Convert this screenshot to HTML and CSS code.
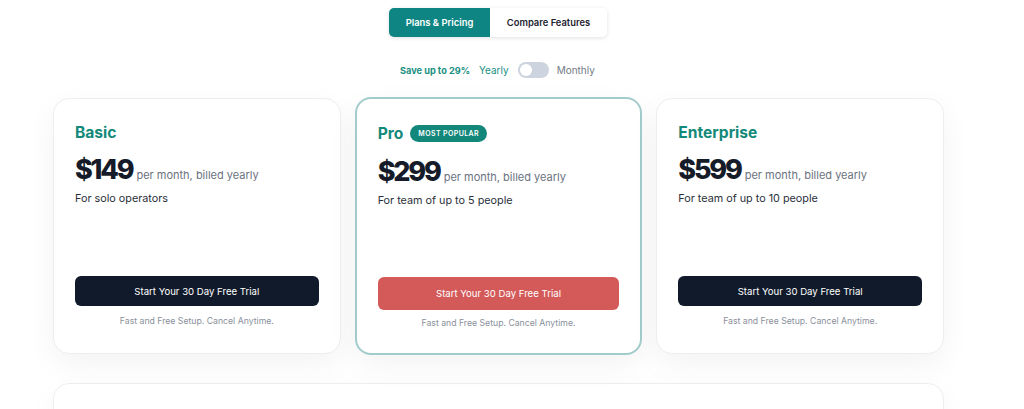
FILE: index.html
```html
<!DOCTYPE html>
<html lang="en">
<head>
  <meta charset="UTF-8">
  <title>Plans &amp; Pricing</title>
  <link rel="stylesheet" href="styles.css">
</head>
<body>
  <div class="page">
    <div class="tabs">
      <button class="tab active">Plans &amp; Pricing</button>
      <button class="tab">Compare Features</button>
    </div>

    <div class="billing">
      <span class="save">Save up to 29%</span>
      <span class="yearly">Yearly</span>
      <span class="switch"><span class="knob"></span></span>
      <span class="monthly">Monthly</span>
    </div>

    <div class="plans">
      <div class="plan">
        <h2>Basic</h2>
        <div class="price"><strong>$149</strong><span>per month, billed yearly</span></div>
        <p class="who">For solo operators</p>
        <button class="trial">Start Your 30 Day Free Trial</button>
        <p class="note">Fast and Free Setup. Cancel Anytime.</p>
      </div>

      <div class="plan popular">
        <h2>Pro <span class="badge">MOST POPULAR</span></h2>
        <div class="price"><strong>$299</strong><span>per month, billed yearly</span></div>
        <p class="who">For team of up to 5 people</p>
        <button class="trial">Start Your 30 Day Free Trial</button>
        <p class="note">Fast and Free Setup. Cancel Anytime.</p>
      </div>

      <div class="plan">
        <h2>Enterprise</h2>
        <div class="price"><strong>$599</strong><span>per month, billed yearly</span></div>
        <p class="who">For team of up to 10 people</p>
        <button class="trial">Start Your 30 Day Free Trial</button>
        <p class="note">Fast and Free Setup. Cancel Anytime.</p>
      </div>
    </div>

    <div class="compare"></div>
  </div>
</body>
</html>
```

FILE: styles.css
```css
:root {
  --teal: #0f8583;
  --title: #13897a;
  --navy: #111a2a;
  --red: #d45a5a;
  --gray: #8a909b;
  --text: #2a2f3a;
}

body {
  margin: 0;
  font-family: Inter, 'Noto Sans', sans-serif;
  background: #fff;
  color: var(--text);
  overflow: hidden;
}

.page {
  width: 891px;
  margin-left: 53px;
  padding-top: 8px;
}

.tabs {
  display: flex;
  width: 218px;
  height: 29px;
  margin: 0 auto 0 336px;
  border-radius: 5px;
  box-shadow: 0 1px 4px rgba(0, 0, 0, 0.12);
  overflow: hidden;
}

.tab {
  border: none;
  background: #fff;
  font-family: inherit;
  font-size: 9.4px;
  font-weight: 600;
  color: #1d2230;
  padding: 0;
  flex: 1 1 auto;
}

.tab.active {
  background: var(--teal);
  color: #fff;
  flex: 0 0 101px;
}

.billing {
  display: flex;
  align-items: center;
  height: 18px;
  margin: 24px 0 0 347px;
  font-size: 9.2px;
}

.save {
  color: #1a8f82;
  font-weight: 700;
  margin-right: 9px;
}

.yearly {
  color: #1a8f82;
  font-size: 10px;
  margin-right: 9px;
}

.monthly {
  color: #747b87;
  font-size: 10px;
  margin-left: 8px;
}

.switch {
  display: inline-flex;
  align-items: center;
  width: 31px;
  height: 16px;
  border-radius: 8px;
  background: #cdd4e0;
}

.knob {
  width: 12px;
  height: 12px;
  margin-left: 2px;
  border-radius: 50%;
  background: #fff;
}

.plans {
  display: grid;
  grid-template-columns: 1fr 1fr 1fr;
  gap: 14px;
  margin-top: 19px;
}

.plan {
  display: flex;
  flex-direction: column;
  height: 256px;
  box-sizing: border-box;
  padding: 23px 21px 0;
  border: 1px solid #eeeeee;
  border-radius: 16px;
  background: #fff;
  box-shadow: 0 10px 30px rgba(0, 0, 0, 0.05);
}

.plan.popular {
  border: 2px solid #a2cbcc;
  margin-top: -1px;
  height: 258px;
  padding-top: 24px;
}

.plan h2 {
  display: flex;
  align-items: center;
  gap: 7px;
  height: 20px;
  margin: 0;
  font-size: 15.6px;
  font-weight: 700;
  color: var(--title);
}

.badge {
  background: #13877a;
  color: #fff;
  font-size: 7px;
  font-weight: 600;
  letter-spacing: 0.4px;
  padding: 0 8px;
  height: 17px;
  line-height: 17px;
  border-radius: 9px;
}

.price {
  display: flex;
  align-items: baseline;
  margin-top: 12px;
}

.price strong {
  font-size: 27px;
  font-weight: 800;
  color: #161b29;
  letter-spacing: -2.2px;
  line-height: 32px;
}

.price span {
  font-size: 11px;
  color: #6b7280;
  margin-left: 4px;
}

.popular .price {
  margin-top: 13px;
}

.who {
  margin: 6px 0 0;
  font-size: 10.8px;
  color: #2a2f3a;
}

.trial {
  margin-top: auto;
  height: 30px;
  border: none;
  border-radius: 6px;
  background: var(--navy);
  color: #fff;
  font-family: inherit;
  font-size: 9.6px;
}

.popular .trial {
  background: var(--red);
  height: 33px;
}

.note {
  margin: 10px 0 27px;
  text-align: center;
  font-size: 8.7px;
  color: var(--gray);
}

.popular .note {
  margin: 8px 0 25px;
}

.compare {
  height: 120px;
  margin-top: 28px;
  border: 1px solid #eeeeee;
  border-radius: 16px;
  box-shadow: 0 10px 30px rgba(0, 0, 0, 0.04);
}
```
